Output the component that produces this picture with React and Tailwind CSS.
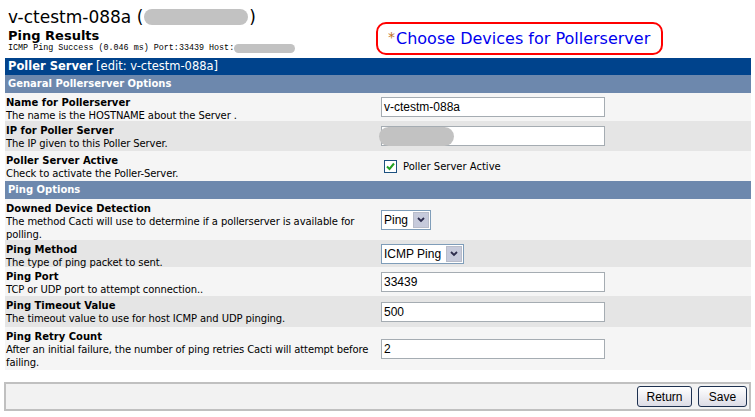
import React from "react";

const rows = [
  { type: "head", label: "Genaral Pollerserver Options" },
  { title: "Name for Pollerserver", desc: "The name is the HOSTNAME about the Server .", field: "text", value: "v-ctestm-088a", h: "h-[28px]", light: true },
  { title: "IP for Poller Server", desc: "The IP given to this Poller Server.", field: "ip", h: "h-[30px]" },
  { title: "Poller Server Active", desc: "Check to activate the Poller-Server.", field: "check", h: "h-[30px]", light: true },
  { type: "head", label: "Ping Options" },
  { title: "Downed Device Detection", desc: "The method Cacti will use to determine if a pollerserver is available for polling.", field: "select", value: "Ping", w: "w-[50px]", h: "h-[41px]", light: true },
  { title: "Ping Method", desc: "The type of ping packet to sent.", field: "select", value: "ICMP Ping", w: "w-[83px]", h: "h-[27px]" },
  { title: "Ping Port", desc: "TCP or UDP port to attempt connection..", field: "text", value: "33439", h: "h-[29px]", light: true },
  { title: "Ping Timeout Value", desc: "The timeout value to use for host ICMP and UDP pinging.", field: "text", value: "500", h: "h-[31px]" },
  { title: "Ping Retry Count", desc: "After an initial failure, the number of ping retries Cacti will attempt before failing.", field: "text", value: "2", h: "h-[43px]", light: true },
];

function Field({ row }) {
  if (row.field === "text") {
    return (
      <div className="w-[224px] h-[20px] border border-[#a5acb2] bg-white flex items-center px-[2px] text-[12px] text-black font-['Liberation_Sans',sans-serif]">
        {row.value}
      </div>
    );
  }
  if (row.field === "ip") {
    return (
      <div className="relative w-[224px] h-[20px] border border-[#a5acb2] bg-white">
        <div className="absolute left-[-3px] top-0 w-[75px] h-[19px] rounded-full bg-[#c2c2c2]" />
      </div>
    );
  }
  if (row.field === "check") {
    return (
      <div className="flex items-center gap-[6px] pl-[3px]">
        <div className="w-[13px] h-[13px] border border-[#1c5180] bg-white flex items-center justify-center">
          <svg width="9" height="9" viewBox="0 0 9 9">
            <path d="M1 4.5 L3.5 7 L8 1.5" stroke="#21a121" strokeWidth="2" fill="none" />
          </svg>
        </div>
        <span className="text-[10px] text-black">Poller Server Active</span>
      </div>
    );
  }
  return (
    <div className={`${row.w} h-[20px] border border-[#7f9db9] bg-white flex items-center justify-between pl-[2px] pr-[1px] text-[12px] text-black font-['Liberation_Sans',sans-serif]`}>
      <span>{row.value}</span>
      <div className="w-[16px] h-[16px] border border-[#b8bcc9] bg-[#c6cadb] flex items-center justify-center">
        <svg width="8" height="6" viewBox="0 0 8 6">
          <path d="M1 1 L4 4 L7 1" stroke="#2c2c4c" strokeWidth="1.8" fill="none" />
        </svg>
      </div>
    </div>
  );
}

export default function App() {
  return (
    <div className="w-[755px] h-[417px] bg-white overflow-hidden font-['DejaVu_Sans',Verdana,sans-serif] text-black">
      <div className="flex h-[58px]">
        <div className="w-[376px] pl-[8px] pt-[6px]">
          <div className="flex items-center text-[17px] leading-[22px]">
            <span>v-ctestm-088a (</span>
            <span className="inline-block w-[104px] h-[16px] rounded-full bg-[#c2c2c2] mx-[1px]" />
            <span>)</span>
          </div>
          <div className="text-[13px] font-bold leading-[14px] mt-[1px]">Ping Results</div>
          <div className="flex items-center text-[8.4px] leading-[10px] font-['Liberation_Mono',monospace]">
            <span>ICMP Ping Success (0.046 ms) Port:33439 Host:</span>
            <span className="inline-block w-[61px] h-[9px] rounded-full bg-[#c2c2c2]" />
          </div>
        </div>
        <div className="pt-[22px]">
          <div className="h-[33px] w-[287px] border-2 border-[#ff0000] rounded-[10px] flex items-center pl-[10px] text-[16px] text-[#0000ee]">
            <span className="text-[#c0701e] text-[14px] self-start mt-[3px] mr-[1px]">*</span>
            <span>Choose Devices for Pollerserver</span>
          </div>
        </div>
      </div>

      <div className="ml-[5px] w-[746px]">
        <div className="h-[17px] bg-[#00438c] text-white text-[11.5px] leading-[17px] pl-[3px]">
          <span className="font-bold">Poller Server</span> <span>[edit: v-ctestm-088a]</span>
        </div>
        {rows.map((row, i) => {
          if (row.type === "head") {
            return (
              <div key={i} className="h-[18px] bg-[#6d88ad] text-white text-[10px] font-bold leading-[18px] pl-[3px]">
                {row.label}
              </div>
            );
          }
          return (
            <div key={i} className={`flex ${row.h} ${row.light ? "bg-[#f5f5f5]" : "bg-[#e5e5e5]"}`}>
              <div className="w-[374px] pt-[3px] pl-[1px] text-[10px] leading-[13px]">
                <div className="font-bold">{row.title}</div>
                <div className="tracking-[-0.1px]">{row.desc}</div>
              </div>
              <div className="flex-1 flex items-center pl-[2px]">
                <Field row={row} />
              </div>
            </div>
          );
        })}
      </div>

      <div className="ml-[4px] mt-[12px] w-[747px] h-[29px] border-2 border-[#c0c0c0] bg-[#f2f2f2] flex items-center justify-end gap-[6px] pr-[2px]">
        <button className="h-[21px] w-[55px] rounded-[3px] border border-[#1e3150] bg-gradient-to-b from-white to-[#dcdce6] text-[12px] font-['Liberation_Sans',sans-serif]">
          Return
        </button>
        <button className="h-[21px] w-[49px] rounded-[3px] border border-[#1e3150] bg-gradient-to-b from-white to-[#dcdce6] text-[12px] font-['Liberation_Sans',sans-serif]">
          Save
        </button>
      </div>
    </div>
  );
}
